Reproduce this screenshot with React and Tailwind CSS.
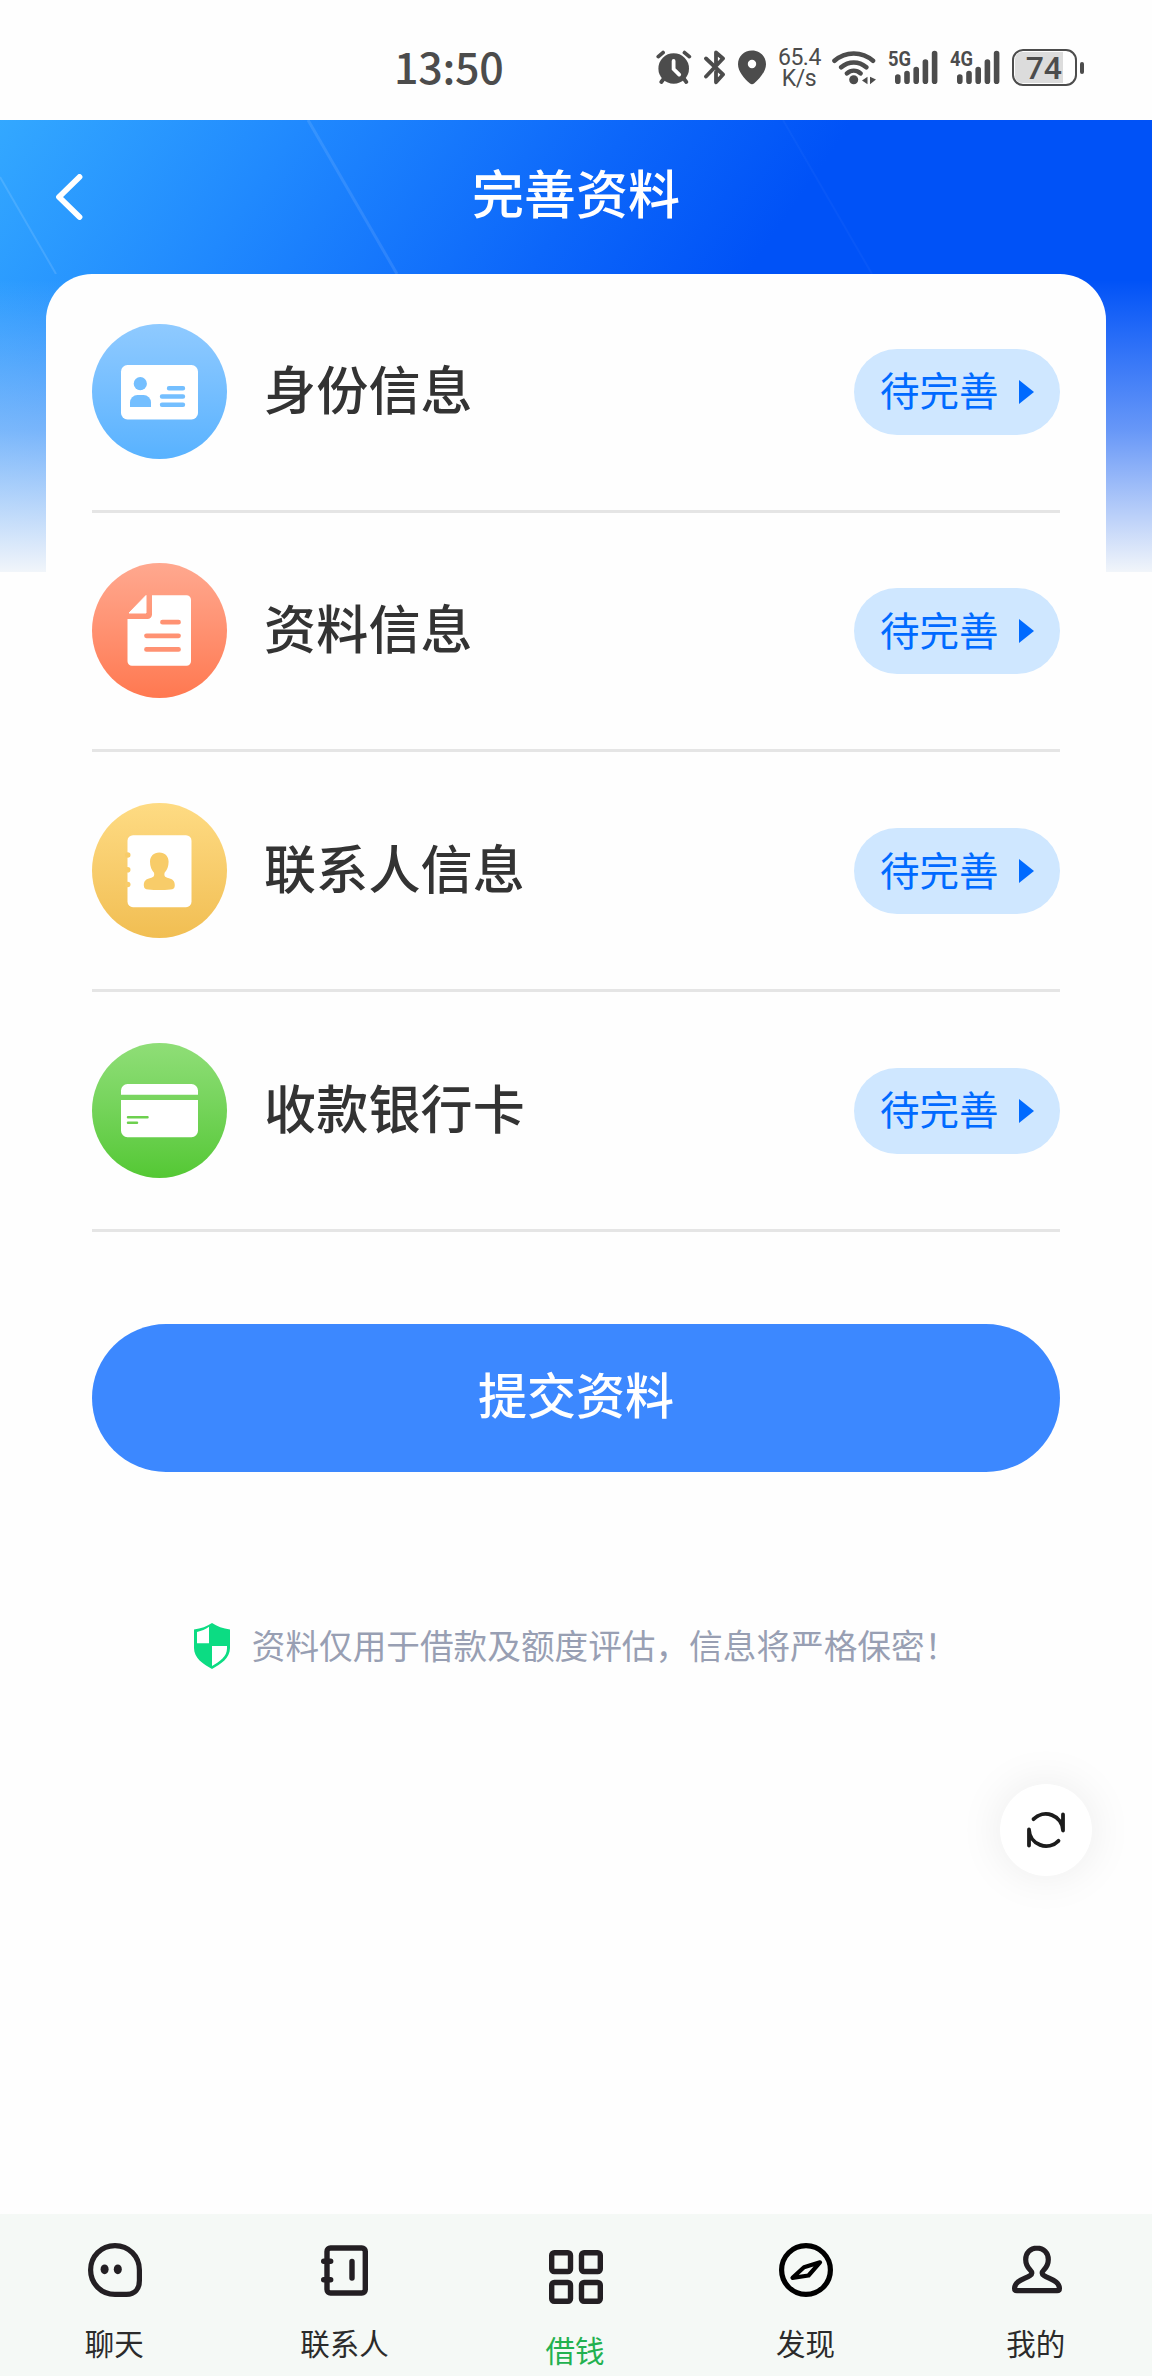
import clsx from "clsx";

/* ---------- Status bar icons ---------- */

const AlarmIcon = () => (
  <svg width="36" height="37" viewBox="0 0 36 37" fill="none" stroke="#4c4c4c" strokeWidth="3.8" strokeLinecap="round">
    <circle cx="17.7" cy="19.5" r="15.3" fill="#4c4c4c" stroke="none" />
    <path d="M2.3 7.6 7 3.6M28.5 3.6l4.8 4M5.3 33l3-4M30.3 33l-3-4" />
    <path d="M17.6 12v8l5.6 5.6" stroke="#fff" />
  </svg>
);

const BluetoothIcon = () => (
  <svg width="22" height="37" viewBox="0 0 22 37" fill="none" stroke="#4c4c4c" strokeWidth="3.8" strokeLinecap="round" strokeLinejoin="round">
    <path d="M2 9.5 19 25.5l-7 7.8V23M12 14V3.5l7 6L2 27.5" />
  </svg>
);

const PinIcon = () => (
  <svg width="28" height="37" viewBox="0 0 28 37" fill="#4c4c4c">
    <path
      fillRule="evenodd"
      d="M14 1.5C6 1.5 0 7.6 0 15.2c0 7.3 6.5 14.5 11.7 19.1a3.4 3.4 0 0 0 4.6 0C21.5 29.7 28 22.5 28 15.2 28 7.6 22 1.5 14 1.5Zm0 9.3a4.2 4.2 0 1 1 0 8.4 4.2 4.2 0 0 1 0-8.4Z"
    />
  </svg>
);

const WifiIcon = () => (
  <svg width="44" height="37" viewBox="0 0 44 37" fill="none" stroke="#4c4c4c" strokeWidth="4.6" strokeLinecap="round">
    <path d="M2.5 11.8C13.5 2 30 2 41 11.8M9.2 18.3c7.5-6.5 17.6-6.5 25.1 0M15 24.4c4-3.6 9.5-3.6 13.5 0" />
    <circle cx="21.7" cy="30.7" r="4.5" fill="#4c4c4c" stroke="none" />
    <path d="M35.5 27.8v7.4L30 31.5ZM38 27.8v7.4l6-4.7Z" fill="#4c4c4c" stroke="none" />
  </svg>
);

const SignalIcon = ({ label }) => (
  <svg width="50" height="37" viewBox="0 0 50 37" fill="none" stroke="#4c4c4c" strokeWidth="5.6" strokeLinecap="round" className="overflow-visible">
    <text
      x="0"
      y="17.3"
      fontSize="20.5"
      textLength="23"
      lengthAdjust="spacingAndGlyphs"
      stroke="none"
      fill="#4c4c4c"
      className="font-['Roboto',sans-serif] font-bold"
    >
      {label}
    </text>
    <path d="M9.8 28v4.2M19 24.5v7.7M28.2 20.5v11.7M37.4 13v19.2M46.6 4.5v27.7" />
  </svg>
);

const Battery = () => (
  <div className="flex items-center gap-[3px]">
    <div className="flex h-[37px] w-[65px] rounded-[11px] border-[2.5px] border-[#4c4c4c] p-px">
      <div className="flex h-full w-[48px] items-center justify-end rounded-l-[7px] bg-[#dcdcdc] pr-px font-['Roboto',sans-serif] text-[32px] leading-none font-medium text-[#4c4c4c]">
        74
      </div>
    </div>
    <div className="h-3 w-1 rounded-full bg-[#4c4c4c]" />
  </div>
);

const StatusBar = () => (
  <div className="flex h-[120px] items-center justify-between bg-[#fefefe] pt-[15px] pr-[68px] pl-[394px] text-[#4c4c4c]">
    <span className="mb-[4px] font-['Noto_Sans_CJK_SC',sans-serif] text-[43px] leading-none font-medium tracking-[-0.3px]">13:50</span>
    <div className="flex items-center gap-3">
      <AlarmIcon />
      <BluetoothIcon />
      <PinIcon />
      <div className="w-[42px] text-center font-['Roboto',sans-serif] text-[23px] leading-[21px] tracking-[-0.5px] whitespace-nowrap">
        65.4
        <br />
        K/s
      </div>
      <WifiIcon />
      <SignalIcon label="5G" />
      <SignalIcon label="4G" />
      <Battery />
    </div>
  </div>
);

/* ---------- Row icons, drawn inside a 135px badge ---------- */

const IdCardIcon = () => (
  <svg viewBox="0 0 135 135" className="size-full">
    <rect x="29" y="41" width="77" height="54.5" rx="6.5" fill="#fff" />
    <g fill="#74bfff">
      <circle cx="48.3" cy="59.7" r="6.6" />
      <path d="M38 83v-4.5a7.5 7.5 0 0 1 7.5-7.5h6a7.5 7.5 0 0 1 7.5 7.5V83Z" />
    </g>
    <path d="M77 64.2h14M70 72.5h21M70 80.8h21" stroke="#74bfff" strokeWidth="4.4" strokeLinecap="round" />
  </svg>
);

const DocumentIcon = () => (
  <svg viewBox="0 0 135 135" className="size-full">
    <path d="M37 50 54 32.5V50Z" fill="#fff" stroke="#fff" strokeLinejoin="round" />
    <path d="M60 32.2h34.5a4.5 4.5 0 0 1 4.5 4.5v61.5a4.5 4.5 0 0 1-4.5 4.5H40a4.5 4.5 0 0 1-4.5-4.5V56H55.5a4.5 4.5 0 0 0 4.5-4.5Z" fill="#fff" />
    <path d="M70.5 59.2h16M54.5 72.8h32M54.5 86.4h32" stroke="#ff9273" strokeWidth="4.8" strokeLinecap="round" />
  </svg>
);

const ContactBookIcon = () => (
  <svg viewBox="0 0 135 135" className="size-full">
    <rect x="35.5" y="32.2" width="64" height="72" rx="5.5" fill="#fff" />
    <g fill="#f8cc69">
      <circle cx="35.7" cy="52" r="2.8" />
      <circle cx="35.7" cy="66.8" r="2.8" />
      <circle cx="35.7" cy="81.5" r="2.8" />
      <path d="M67.3 49.5c-5.6 0-9.3 3.8-9.3 9.3 0 4.7 1.5 8.2 4 11 .8 3.5-.8 4.5-3.5 5.2-4.5 1-6.7 3-6.7 7.2 0 3 1.5 4 4.5 4.3 7.3.7 14.7.7 22 0 3-.3 4.5-1.3 4.5-4.3 0-4.2-2.2-6.2-6.7-7.2-2.7-.7-4.3-1.7-3.5-5.2 2.5-2.8 4-6.3 4-11 0-5.5-3.7-9.3-9.3-9.3Z" />
    </g>
  </svg>
);

const BankCardIcon = () => (
  <svg viewBox="0 0 135 135" className="size-full">
    <path d="M29 51.7V47.5a6.5 6.5 0 0 1 6.5-6.5h64a6.5 6.5 0 0 1 6.5 6.5v4.2ZM29 57h77v30.7a6.5 6.5 0 0 1-6.5 6.5h-64a6.5 6.5 0 0 1-6.5-6.5Z" fill="#fff" />
    <path d="M36 74.2h19.5M36 79.8h9" stroke="#6dd04f" strokeWidth="2.5" strokeLinecap="round" />
  </svg>
);

const profileItems = [
  { name: "身份信息", icon: <IdCardIcon />, color: "from-[#8fcaff] to-[#58b2ff]" },
  { name: "资料信息", icon: <DocumentIcon />, color: "from-[#ffa88f] to-[#ff7850]" },
  { name: "联系人信息", icon: <ContactBookIcon />, color: "from-[#fedb83] to-[#f1be52]" },
  { name: "收款银行卡", icon: <BankCardIcon />, color: "from-[#8fde77] to-[#54c833]" },
];

const ProfileRow = ({ item }) => (
  <li className="flex h-[239.67px] items-center border-b-[3px] border-[#e5e5e5]">
    <div className={clsx("size-[135px] shrink-0 overflow-hidden rounded-full bg-linear-to-b", item.color)}>{item.icon}</div>
    <span className="mb-[7px] ml-[37px] text-[52px] leading-[60px] font-medium tracking-[0.2px] text-[#333]">{item.name}</span>
    <button className="mt-px ml-auto flex h-[86px] w-[206px] items-center rounded-full bg-[#cfe7ff] pl-[26px] text-[39.5px] text-[#006aff]">
      <span className="mb-[5px] leading-[44px]">待完善</span>
      <svg width="15" height="24" viewBox="0 0 15 24" className="ml-[20px]">
        <path d="M0 0v24l15-12Z" fill="#006aff" />
      </svg>
    </button>
  </li>
);

/* ---------- Header ---------- */

const Header = () => (
  <header className="relative flex h-[154px] items-center justify-center">
    {/* Diagonal light streaks */}
    <svg width="1152" height="154" viewBox="0 0 1152 154" className="absolute inset-0" fill="none">
      <path d="M0 57 56 154" stroke="#fff" strokeOpacity=".12" strokeWidth="2" />
      <path d="m308 0 89 154" stroke="#fff" strokeOpacity=".1" strokeWidth="3" />
      <path d="m783 0 89 154" stroke="#fff" strokeOpacity=".03" strokeWidth="2" />
    </svg>
    <button className="absolute top-[54px] left-[55px]" aria-label="返回">
      <svg width="28" height="46" viewBox="0 0 28 46" fill="none" stroke="#fff" strokeWidth="5.8" strokeLinecap="round" strokeLinejoin="round">
        <path d="M24.5 3 4 23l20.5 20" />
      </svg>
    </button>
    <h1 className="relative mb-[10px] text-[52px] leading-[60px] font-medium text-white">完善资料</h1>
  </header>
);

/* ---------- Bottom tabs ---------- */

const ChatIcon = () => (
  <svg width="54" height="54" viewBox="0 0 54 54" fill="none" stroke="#231f23" strokeWidth="5.2">
    <path d="M27 2.6C13.3 2.6 2.6 13.3 2.6 27S13.3 51.4 27 51.4h11.5c8.5 0 12.9-5.5 12.9-14V27C51.4 13.3 40.7 2.6 27 2.6Z" />
    <ellipse cx="16.6" cy="26.3" rx="4" ry="4.9" fill="#231f23" stroke="none" />
    <ellipse cx="29.8" cy="26.3" rx="4" ry="4.9" fill="#231f23" stroke="none" />
  </svg>
);

const NotebookIcon = () => (
  <svg width="47" height="54" viewBox="0 0 47 54" fill="none" stroke="#231f23" strokeWidth="5.4" strokeLinecap="round" className="mr-[3px]">
    <rect x="6" y="5" width="38.3" height="45" rx="3.5" />
    <path d="M2.7 18.3h7M2.7 36.7h7M31 18.5v16.5" />
  </svg>
);

const GridIcon = () => (
  <svg width="54" height="54" viewBox="0 0 54 54" fill="none" stroke="#231f23" strokeWidth="5.4">
    <rect x="2.7" y="2.7" width="18.8" height="18.8" rx="2.5" />
    <rect x="32.5" y="2.7" width="18.8" height="18.8" rx="2.5" />
    <rect x="2.7" y="32.5" width="18.8" height="18.8" rx="2.5" />
    <rect x="32.5" y="32.5" width="18.8" height="18.8" rx="2.5" />
  </svg>
);

const CompassIcon = () => (
  <svg width="54" height="54" viewBox="0 0 54 54" fill="none" stroke="#000" strokeWidth="5.2" strokeLinejoin="round">
    <circle cx="27" cy="27" r="24.4" />
    <path d="M41 19.3 25 24.3 13.5 34.8l16-2.3Z" strokeWidth="4.2" />
  </svg>
);

const PersonIcon = () => (
  <svg width="50" height="54" viewBox="0 0 50 54" fill="none" stroke="#231f23" strokeWidth="5.2" strokeLinejoin="round">
    <path d="M25 5c-6.6 0-11.3 5-11.3 11.5 0 4.5 2 8 4.5 10.500 2.200 2.200 2.200 4-.3 5.700C13 36 2.600 37.500 2.600 45.500c0 1.500.7 2.200 2.200 2.200h40.400c1.500 0 2.200-.7 2.200-2.200 0-8-10.400-9.500-15.300-12.800-2.500-1.700-2.500-3.500-.3-5.700 2.500-2.500 4.500-6 4.500-10.500C36.300 10 31.600 5 25 5Z" />
  </svg>
);

const tabs = [
  { name: "聊天", icon: <ChatIcon /> },
  { name: "联系人", icon: <NotebookIcon /> },
  { name: "借钱", icon: <GridIcon />, active: true },
  { name: "发现", icon: <CompassIcon /> },
  { name: "我的", icon: <PersonIcon /> },
];

const TabBar = () => (
  <nav className="grid h-[162px] grid-cols-5 bg-[#f5f9f6]">
    {tabs.map((tab) => (
      <a
        key={tab.name}
        className={clsx(
          "flex flex-col items-center text-[29.5px] leading-[36px]",
          tab.active ? "pt-[35.5px] text-[#22b14f]" : "pt-[29px] text-[#2b2b2b]"
        )}
      >
        {tab.icon}
        <span className="mt-[27px] mr-[2px]">{tab.name}</span>
      </a>
    ))}
  </nav>
);

const ShieldIcon = () => (
  <svg width="38" height="46" viewBox="0 0 38 46">
    <path d="M19 0c5 3.500 11 5.500 18 6.500V25c0 10-9 16-18 21C10 41 1 35 1 25V6.500C8 5.500 14 3.500 19 0Z" fill="#0cdc83" />
    <path d="M16 3.800v16.400H4V9c4.500-.9 8.500-2.700 12-5.200ZM19 23h15v2.500c0 8-7 13-15 17.500Z" fill="#fff" />
  </svg>
);

const RefreshButton = () => (
  <button
    aria-label="刷新"
    className="absolute top-[1784px] right-[60px] flex size-[92px] items-center justify-center rounded-full bg-white pr-px shadow-[0_0_46px_rgba(0,0,0,0.08)]"
  >
    <svg width="38" height="40" viewBox="0 0 38 40" fill="none" stroke="#1c1c1c" strokeWidth="3.8" strokeLinecap="round" strokeLinejoin="round">
      <path d="M6.5 9.2A17.2 17.2 0 0 1 36 20.5V4.5" />
      <path d="M31.5 30.8A17.2 17.2 0 0 1 2 19.5v16" />
    </svg>
  </button>
);

const App = () => {
  return (
    <div className="relative flex h-[2376px] w-[1152px] flex-col overflow-hidden bg-[#fefefe] font-['Noto_Sans_CJK_SC',sans-serif]">
      <StatusBar />

      <main className="flex-1 bg-[linear-gradient(to_bottom,rgba(190,210,245,0)_160px,rgba(205,220,248,0.5)_310px,#f1f5fa_452px),linear-gradient(125deg,#33a8ff_0,#2089fe_250px,#0c66fa_520px,#0052f7_700px)] bg-[length:100%_452px] bg-no-repeat">
        <Header />

        <section className="mx-[46px] rounded-t-[46px] bg-[#fefefe] px-[46px] pt-px">
          <ul className="-mt-[2px]">
            {profileItems.map((item) => (
              <ProfileRow key={item.name} item={item} />
            ))}
          </ul>

          <button className="mt-[92px] flex h-[148px] w-full items-center justify-center rounded-full bg-[#3c88ff] pb-[9px] text-[49px] leading-[56px] font-medium text-white">
            提交资料
          </button>

          <div className="mt-[148px] flex items-center justify-center pr-px text-[33.65px] leading-[50px] text-[#989fb3]">
            <ShieldIcon />
            <span className="mb-[3px] ml-[21px] whitespace-nowrap">资料仅用于借款及额度评估，信息将严格保密！</span>
          </div>
        </section>
      </main>

      <RefreshButton />
      <TabBar />
    </div>
  );
};

export default App;
